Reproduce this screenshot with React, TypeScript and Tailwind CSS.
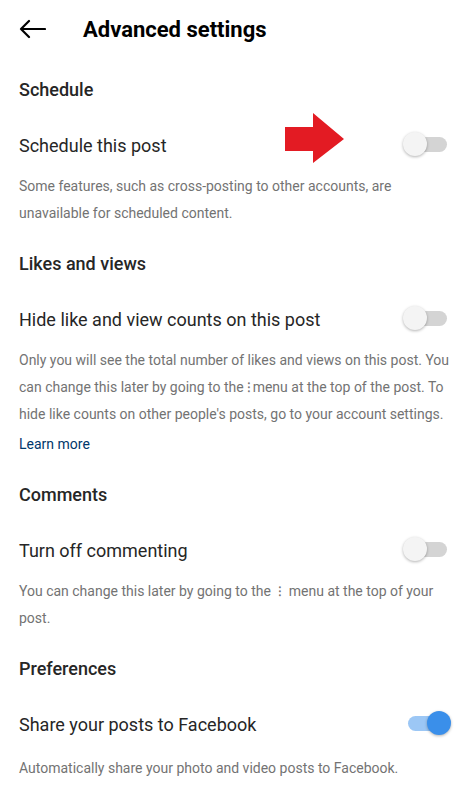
import type { ReactNode } from 'react'

function Toggle({ on = false }: { on?: boolean }) {
  return (
    <div className="relative w-[48px] h-[26px] flex-none">
      <div
        className={`absolute left-[5px] right-[4px] top-[5px] h-[15px] rounded-full ${
          on ? 'bg-[#9cc7f5]' : 'bg-[#d4d4d4]'
        }`}
      />
      <div
        className={`absolute top-0 w-[24px] h-[24px] rounded-full shadow-[0_1px_3px_rgba(0,0,0,0.3)] ${
          on ? 'right-0 bg-[#3a8fea]' : 'left-0 bg-[#f4f4f4]'
        }`}
      />
    </div>
  )
}

function SectionTitle({ children }: { children: ReactNode }) {
  return (
    <div className="h-[62px] flex items-center px-[19px] text-[18px] font-medium text-[#262626]">
      {children}
    </div>
  )
}

function Row({ label, on }: { label: string; on?: boolean }) {
  return (
    <div className="h-[50px] flex items-center justify-between pl-[19px] pr-[20px]">
      <span className="text-[18px] text-[#262626]">{label}</span>
      <Toggle on={on} />
    </div>
  )
}

function Desc({ children, last }: { children: ReactNode; last?: boolean }) {
  return (
    <div
      className={`pl-[19px] pr-[12px] pb-[5px] text-[14px] leading-[27px] text-[#737373] ${
        last ? 'pt-[6px]' : 'pt-[3px]'
      }`}
    >
      {children}
    </div>
  )
}

export default function App() {
  return (
    <div className="relative w-[471px] h-[800px] bg-white overflow-hidden font-['Roboto',sans-serif]">
      <div className="h-[58px] flex items-center">
        <div className="w-[83px] pl-[19px]">
          <svg width="27" height="20" viewBox="0 0 27 20" fill="none" stroke="#000" strokeWidth="2.2" strokeLinecap="round" strokeLinejoin="round">
            <path d="M26 10H2M10 2L2 10l8 8" />
          </svg>
        </div>
        <h1 className="text-[22px] font-bold text-black">Advanced settings</h1>
      </div>

      <SectionTitle>Schedule</SectionTitle>
      <Row label="Schedule this post" />
      <Desc>
        Some features, such as cross-posting to other accounts, are
        <br />
        unavailable for scheduled content.
      </Desc>

      <SectionTitle>Likes and views</SectionTitle>
      <Row label="Hide like and view counts on this post" />
      <Desc>
        <p>
          Only you will see the total number of likes and views on this post. You can change this later by going to the ⁝&#8202;menu at the top of the post. To hide like counts on other people's posts, go to your account settings.
        </p>
        <p className="mt-[3px] text-[#00376b]">Learn more</p>
      </Desc>

      <SectionTitle>Comments</SectionTitle>
      <Row label="Turn off commenting" />
      <Desc>
        You can change this later by going to the &nbsp;⁝&nbsp; menu at the top of your
        <br />
        post.
      </Desc>

      <SectionTitle>Preferences</SectionTitle>
      <Row label="Share your posts to Facebook" on />
      <Desc last>Automatically share your photo and video posts to Facebook.</Desc>

      {/* annotation arrow */}
      <svg className="absolute left-[285px] top-[113px]" width="60" height="51" viewBox="0 0 60 51">
        <polygon points="0,14 28,14 28,0 59,26 28,50 28,38 0,38" fill="#e31b23" />
      </svg>
    </div>
  )
}
